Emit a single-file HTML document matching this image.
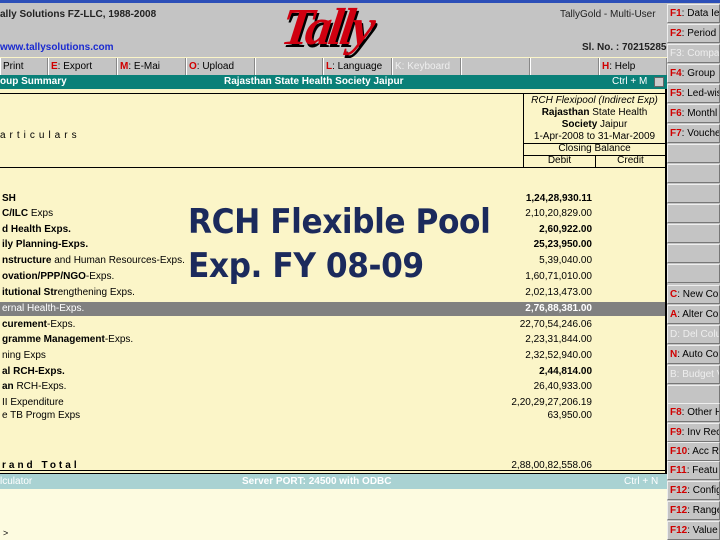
<!DOCTYPE html>
<html><head><meta charset="utf-8"><style>
*{margin:0;padding:0;box-sizing:border-box}
body{width:720px;height:540px;position:relative;overflow:hidden;background:#fbf5c8;font-family:"Liberation Sans",Arial,sans-serif;font-size:10px;color:#000}
.a{position:absolute;white-space:nowrap}
.hdr{left:0;top:3px;width:667px;height:54px;background:#c4c4c4}
.btn{top:58px;height:17px;background:#c4c4c4;border-left:1px solid #fff;border-right:1px solid #888;padding:3px 0 0 2px;font-size:10px}
.k{color:#d00000;font-weight:bold}
.row{left:0;width:665px;height:14px;line-height:14px;font-size:10px}
.row .n{position:absolute;left:2px}
.row .v{position:absolute;right:73px}
.rb{left:667px;width:53px;height:19px;background:#c4c4c4;border-top:1px solid #eee;border-left:1px solid #eee;border-bottom:1px solid #777;border-right:1px solid #777;font-size:10px;padding:3px 0 0 2px;overflow:hidden}
</style></head><body>
<div class="a" style="left:0;top:0;width:720px;height:3px;background:#2c4fb8"></div>
<div class="a hdr"></div>
<div class="a" style="left:0;top:9px;font-size:10px;font-weight:bold;color:#222">ally Solutions FZ-LLC, 1988-2008</div>
<div class="a" style="left:0;top:42px;font-size:10px;font-weight:bold;color:#1a2ad0">www.tallysolutions.com</div>
<div class="a" style="left:282px;top:-2px;font-family:'Liberation Serif',serif;font-style:italic;font-weight:bold;font-size:52px;color:#d00010;text-shadow:2px 3px 0 #000;letter-spacing:-3px;transform:skewX(-8deg)">Tally</div>
<div class="a" style="left:560px;top:9px;font-size:10px;color:#222">TallyGold - Multi-User</div>
<div class="a" style="left:582px;top:42px;font-size:10px;font-weight:bold;color:#222">Sl. No. : 702152856</div>
<div class="a btn" style="left:0;width:48px">Print</div>
<div class="a btn" style="left:48px;width:69px"><span class="k">E</span>: Export</div>
<div class="a btn" style="left:117px;width:69px"><span class="k">M</span>: E-Mai</div>
<div class="a btn" style="left:186px;width:69px"><span class="k">O</span>: Upload</div>
<div class="a btn" style="left:255px;width:68px"></div>
<div class="a btn" style="left:323px;width:69px"><span class="k">L</span>: Language</div>
<div class="a btn" style="left:392px;width:69px;color:#eee"><span style="color:#eee">K</span>: Keyboard</div>
<div class="a btn" style="left:461px;width:69px"></div>
<div class="a btn" style="left:530px;width:69px"></div>
<div class="a btn" style="left:599px;width:68px"><span class="k">H</span>: Help</div>
<div class="a" style="left:0;top:75px;width:667px;height:14px;background:#0a8078"></div>
<div class="a" style="left:0;top:76px;color:#fff;font-weight:bold">oup Summary</div>
<div class="a" style="left:224px;top:76px;color:#fff;font-weight:bold">Rajasthan State Health Society Jaipur</div>
<div class="a" style="left:612px;top:76px;color:#fff">Ctrl + M</div>
<div class="a" style="left:654px;top:77px;width:10px;height:10px;background:#ccc;border:1px solid #666"></div>
<div class="a" style="left:0;top:93px;width:665px;height:1px;background:#000"></div>
<div class="a" style="left:0;top:167px;width:665px;height:1px;background:#000"></div>
<div class="a" style="left:523px;top:93px;width:1px;height:75px;background:#000"></div>
<div class="a" style="left:665px;top:89px;width:2px;height:385px;background:#000"></div>
<div class="a" style="left:523px;top:143px;width:142px;height:1px;background:#000"></div>
<div class="a" style="left:523px;top:155px;width:142px;height:1px;background:#000"></div>
<div class="a" style="left:595px;top:155px;width:1px;height:12px;background:#000"></div>
<div class="a" style="left:524px;top:95px;width:141px;text-align:center;line-height:12px;font-size:10px"><i>RCH Flexipool (Indirect Exp)</i><br><b>Rajasthan</b> State Health<br><b>Society</b> Jaipur<br>1-Apr-2008 to 31-Mar-2009</div>
<div class="a" style="left:524px;top:143px;width:141px;text-align:center;line-height:12px">Closing Balance</div>
<div class="a" style="left:524px;top:155px;width:71px;text-align:center;line-height:12px">Debit</div>
<div class="a" style="left:596px;top:155px;width:69px;text-align:center;line-height:12px">Credit</div>
<div class="a" style="left:0;top:130px;letter-spacing:4px">articulars</div>

<div class="a row" style="top:192px"><b class="n">SH</b><b class="v">1,24,28,930.11</b></div>
<div class="a row" style="top:207px"><span class="n"><b>C/ILC</b> Exps</span><span class="v">2,10,20,829.00</span></div>
<div class="a row" style="top:223px"><b class="n">d Health Exps.</b><b class="v">2,60,922.00</b></div>
<div class="a row" style="top:238px"><b class="n">ily Planning-Exps.</b><b class="v">25,23,950.00</b></div>
<div class="a row" style="top:254px"><span class="n"><b>nstructure</b> and Human Resources-Exps.</span><span class="v">5,39,040.00</span></div>
<div class="a row" style="top:270px"><span class="n"><b>ovation/PPP/NGO</b>-Exps.</span><span class="v">1,60,71,010.00</span></div>
<div class="a row" style="top:286px"><span class="n"><b>itutional Str</b>engthening Exps.</span><span class="v">2,02,13,473.00</span></div>
<div class="a" style="left:0;top:302px;width:665px;height:14px;background:#808080"></div>
<div class="a row" style="top:302px;color:#fff"><span class="n">ernal Health-Exps.</span><b class="v">2,76,88,381.00</b></div>
<div class="a row" style="top:318px"><span class="n"><b>curement</b>-Exps.</span><span class="v">22,70,54,246.06</span></div>
<div class="a row" style="top:333px"><span class="n"><b>gramme Management</b>-Exps.</span><span class="v">2,23,31,844.00</span></div>
<div class="a row" style="top:349px"><span class="n">ning Exps</span><span class="v">2,32,52,940.00</span></div>
<div class="a row" style="top:365px"><b class="n">al RCH-Exps.</b><b class="v">2,44,814.00</b></div>
<div class="a row" style="top:380px"><span class="n"><b>an</b> RCH-Exps.</span><span class="v">26,40,933.00</span></div>
<div class="a row" style="top:396px"><span class="n">II Expenditure</span><span class="v">2,20,29,27,206.19</span></div>
<div class="a row" style="top:409px"><span class="n">e TB Progm Exps</span><span class="v">63,950.00</span></div>
<div class="a row" style="top:459px"><b class="n" style="letter-spacing:3px">rand Total</b><span class="v">2,88,00,82,558.06</span></div>
<div class="a" style="left:0;top:470px;width:665px;height:4px;border-top:1px solid #000;border-bottom:1px solid #000"></div>

<div class="a" style="left:188px;top:200px;font-family:'DejaVu Sans',sans-serif;font-weight:bold;font-size:34px;line-height:44px;color:#1b2a5c;letter-spacing:-0.5px;transform:scaleX(0.92);transform-origin:left">RCH Flexible Pool<br>Exp. FY 08-09</div>

<div class="a" style="left:0;top:474px;width:667px;height:15px;background:#a9d2d2"></div>
<div class="a" style="left:0;top:476px;color:#fff">lculator</div>
<div class="a" style="left:242px;top:476px;color:#fff;font-weight:bold">Server PORT: 24500 with ODBC</div>
<div class="a" style="left:624px;top:476px;color:#fff">Ctrl + N</div>
<div class="a" style="left:0;top:489px;width:667px;height:51px;background:#fdfbe0"></div>
<div class="a" style="left:3px;top:528px;font-size:9px">&gt;</div>

<div class="a" style="left:667px;top:3px;width:53px;height:537px;background:#c4c4c4"></div>
<div class="a rb" style="top:4px"><span class="k">F1</span>: Data Ie</div>
<div class="a rb" style="top:24px"><span class="k">F2</span>: Period</div>
<div class="a rb" style="top:44px;color:#eee">F3: Compa</div>
<div class="a rb" style="top:64px"><span class="k">F4</span>: Group</div>
<div class="a rb" style="top:84px"><span class="k">F5</span>: Led-wis</div>
<div class="a rb" style="top:104px"><span class="k">F6</span>: Monthl</div>
<div class="a rb" style="top:124px"><span class="k">F7</span>: Vouche</div>
<div class="a rb" style="top:144px"></div>
<div class="a rb" style="top:164px"></div>
<div class="a rb" style="top:184px"></div>
<div class="a rb" style="top:204px"></div>
<div class="a rb" style="top:224px"></div>
<div class="a rb" style="top:244px"></div>
<div class="a rb" style="top:264px"></div>
<div class="a rb" style="top:285px"><span class="k">C</span>: New Co</div>
<div class="a rb" style="top:305px"><span class="k">A</span>: Alter Co</div>
<div class="a rb" style="top:325px;color:#eee">D: Del Colu</div>
<div class="a rb" style="top:345px"><span class="k">N</span>: Auto Co</div>
<div class="a rb" style="top:365px;color:#eee">B: Budget Va</div>
<div class="a rb" style="top:385px"></div>
<div class="a rb" style="top:403px"><span class="k">F8</span>: Other H</div>
<div class="a rb" style="top:423px"><span class="k">F9</span>: Inv Rec</div>
<div class="a rb" style="top:442px"><span class="k">F10</span>: Acc R</div>
<div class="a rb" style="top:461px"><span class="k">F11</span>: Featu</div>
<div class="a rb" style="top:481px"><span class="k">F12</span>: Config</div>
<div class="a rb" style="top:501px"><span class="k">F12</span>: Range</div>
<div class="a rb" style="top:521px"><span class="k">F12</span>: Value</div>
</body></html>
